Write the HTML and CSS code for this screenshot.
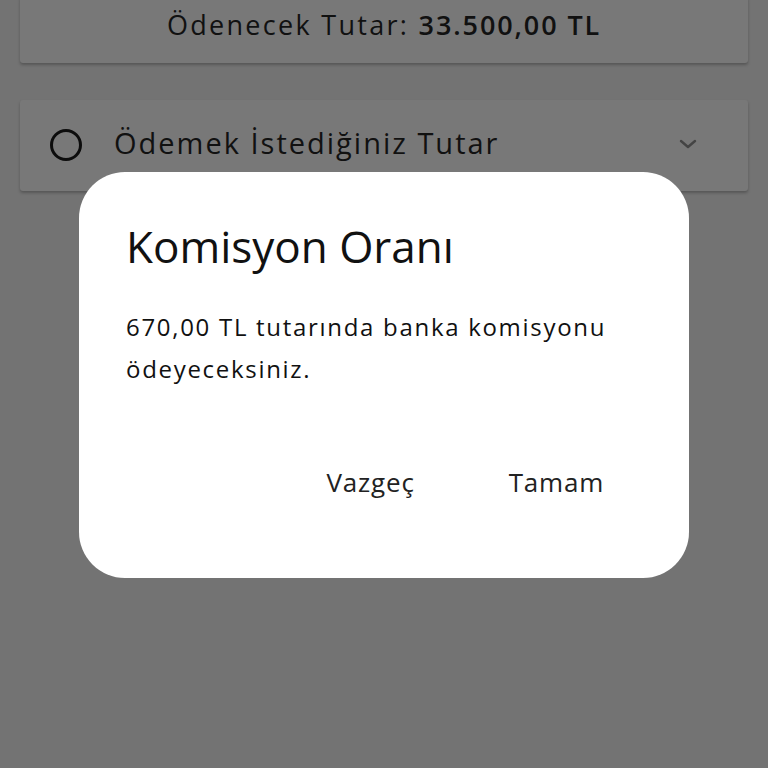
FILE: index.html
```html
<!DOCTYPE html>
<html lang="tr">
<head>
  <meta charset="UTF-8">
  <meta name="viewport" content="width=device-width, initial-scale=1.0">
  <title>Ödeme</title>
  <link rel="stylesheet" href="styles.css">
</head>
<body>
  <div class="page">
    <div class="card total-card">
      Ödenecek Tutar: <b>33.500,00 TL</b>
    </div>

    <div class="card option-card">
      <span class="radio"></span>
      <span class="option-label">Ödemek İstediğiniz Tutar</span>
      <svg class="chevron" width="24" height="24" viewBox="0 0 24 24">
        <path d="M5 9l7 6 7-6" fill="none" stroke="#444" stroke-width="2.4" stroke-linecap="round" stroke-linejoin="round"/>
      </svg>
    </div>
  </div>

  <div class="overlay">
    <div class="dialog">
      <h2>Komisyon Oranı</h2>
      <p>670,00 TL tutarında banka komisyonu ödeyeceksiniz.</p>
      <div class="actions">
        <button>Vazgeç</button>
        <button>Tamam</button>
      </div>
    </div>
  </div>
</body>
</html>
```

FILE: styles.css
```css
body {
  font-family: 'Open Sans', 'Lato', sans-serif;
  background: #737373;
  margin: 0;
  min-height: 100vh;
  color: #0c0c0c;
}

.page {
  padding: 0 20px;
}

.card {
  background: #787878;
  box-shadow: 0 2px 3px rgba(0,0,0,0.25);
  border-radius: 3px;
}

.total-card {
  height: 67px;
  margin-top: -4px;
  text-align: center;
  font-size: 27px;
  letter-spacing: 2.3px;
  line-height: 58px;
  color: #111;
}

.total-card b {
  font-weight: 600;
  letter-spacing: 1.9px;
}

.option-card {
  margin-top: 37px;
  height: 91px;
  display: flex;
  align-items: center;
  padding: 0 48px 0 30px;
}

.radio {
  width: 26px;
  height: 26px;
  border: 3px solid #0c0c0c;
  border-radius: 50%;
  margin-right: 32px;
  margin-top: -2px;
  flex: none;
}

.option-label {
  font-size: 29px;
  letter-spacing: 2px;
  flex: 1;
  margin-top: -6px;
  color: #111;
}

.chevron {
  margin-top: -4px;
}

.overlay {
  position: fixed;
  inset: 0;
  display: flex;
  justify-content: center;
  align-items: flex-start;
}

.dialog {
  margin-top: 172px;
  width: 610px;
  height: 406px;
  box-sizing: border-box;
  background: #fff;
  border-radius: 46px;
  padding: 44px 30px 0 47px;
  color: #111;
}

.dialog h2 {
  margin: 0;
  font-size: 44px;
  font-weight: 400;
  line-height: 60px;
}

.dialog p {
  margin: 30px 0 0;
  font-size: 24px;
  letter-spacing: 1.7px;
  line-height: 42px;
}

.actions {
  display: flex;
  justify-content: flex-end;
  gap: 94px;
  margin-top: 74px;
  padding-right: 55px;
}

.actions button {
  background: none;
  border: none;
  padding: 0;
  font-family: inherit;
  font-size: 26px;
  letter-spacing: 0.8px;
  color: #222;
  cursor: pointer;
}
```
